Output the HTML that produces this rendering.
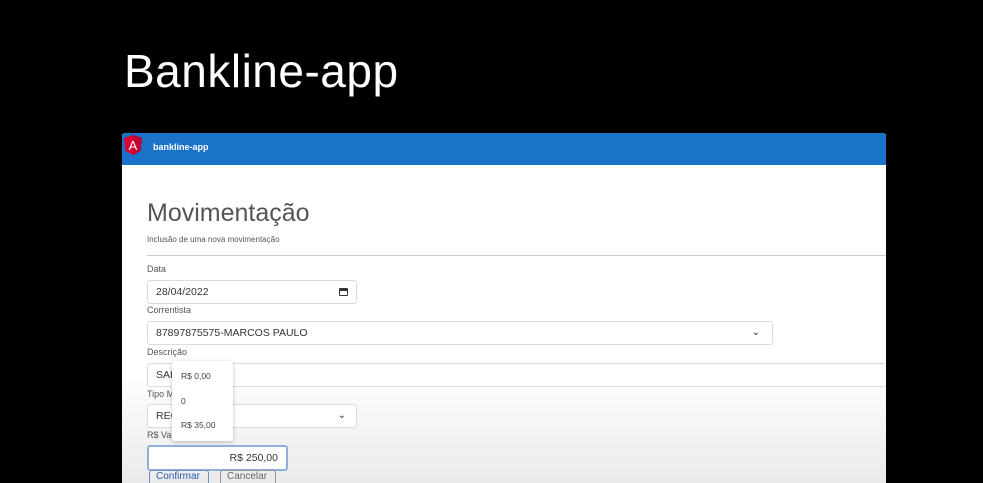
<!DOCTYPE html>
<html><head><meta charset="utf-8"><style>
body{margin:0;width:983px;height:483px;background:#000;overflow:hidden;position:relative;font-family:"Liberation Sans",sans-serif}
.a{position:absolute}
.title{left:124px;top:44px;color:#fff;font-size:46px;letter-spacing:0.5px;font-family:"Liberation Sans",sans-serif}
.win{left:122px;top:133px;width:764px;height:350px;background:#fff;border-radius:3px 3px 0 0;overflow:hidden}
.hdr{left:0;top:0;width:764px;height:32px;background:#1b72c9}
.lbl{font-size:9px;color:#555}
.inp{border:1px solid #dcdcdc;border-radius:3px;background:#fff;font-size:10.5px;color:#333;box-sizing:border-box;padding-left:8px;line-height:22px}
.shade{left:0;top:240px;width:764px;height:110px;background:linear-gradient(to bottom,rgba(255,255,255,0),rgba(225,225,225,0.7))}
</style></head><body>
<div class="a title">Bankline-app</div>
<div class="a win">
 <div class="shade a"></div>
 <div class="a hdr">
  <svg class="a" style="left:2px;top:2px" width="18" height="20" viewBox="0 0 18 20"><polygon points="9,0 18,3 16.5,16 9,20 1.5,16 0,3" fill="#dd0031"/><polygon points="9,0 18,3 16.5,16 9,20" fill="#c3002f"/><text x="9" y="15" font-size="13" fill="#fff" text-anchor="middle" font-family="Liberation Sans">A</text></svg>
  <div class="a" style="left:31px;top:9px;color:#fff;font-size:9px;font-weight:bold">bankline-app</div>
 </div>
 <div class="a" style="left:25px;top:66px;font-size:25px;color:#555;font-family:'Liberation Sans',sans-serif">Movimentação</div>
 <div class="a lbl" style="left:25px;top:102px;font-size:8px">Inclusão de uma nova movimentação</div>
 <div class="a" style="left:25px;top:122px;width:739px;height:1px;background:#ccc"></div>
 <div class="a lbl" style="left:25px;top:131px">Data</div>
 <div class="a inp" style="left:25px;top:147px;width:210px;height:24px">28/04/2022<span class="a" style="right:8px;top:7px;width:9px;height:8px;border:1.5px solid #333;border-top-width:3px;border-radius:1px;box-sizing:border-box"></span></div>
 <div class="a lbl" style="left:25px;top:172px">Correntista</div>
 <div class="a inp" style="left:25px;top:188px;width:626px;height:24px">87897875575-MARCOS PAULO<span class="a" style="right:12px;top:0;font-size:10px">⌄</span></div>
 <div class="a lbl" style="left:25px;top:214px">Descrição</div>
 <div class="a inp" style="left:25px;top:230px;width:739px;height:24px;border-right:none">SAL</div>
 <div class="a lbl" style="left:25px;top:256px">Tipo M</div>
 <div class="a inp" style="left:25px;top:271px;width:210px;height:24px">REC<span class="a" style="right:10px;top:0;font-size:10px">⌄</span></div>
 <div class="a lbl" style="left:25px;top:297px">R$ Val</div>
 <div class="a inp" style="left:25px;top:312px;width:141px;height:26px;border:2px solid #8fb0dc;text-align:right;padding-right:8px;line-height:22px">R$ 250,00</div>
 <div class="a" style="left:27px;top:337px;width:60px;height:20px;border:1.5px solid #6f8fc4;border-radius:3px;color:#2a5caa;font-size:10px;padding-left:6px;box-sizing:border-box">Confirmar</div>
 <div class="a" style="left:98px;top:337px;width:56px;height:20px;border:1.5px solid #999;border-radius:3px;color:#666;font-size:10px;padding-left:6px;box-sizing:border-box">Cancelar</div>
 <div class="a" style="left:50px;top:228px;width:61px;height:80px;background:#fff;border-radius:3px;box-shadow:0 1px 4px rgba(0,0,0,0.25);font-size:8.5px;color:#444">
  <div class="a" style="left:9px;top:10px">R$ 0,00</div>
  <div class="a" style="left:9px;top:35px">0</div>
  <div class="a" style="left:9px;top:59px">R$ 35,00</div>
 </div>
</div>
</body></html>
